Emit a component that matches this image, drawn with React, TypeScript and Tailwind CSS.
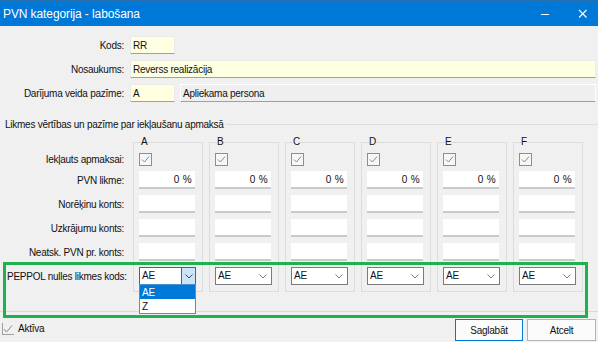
import React from 'react';

const cols = ['A', 'B', 'C', 'D', 'E', 'F'];

const CheckBox = ({ className = '' }: { className?: string }) => (
    <svg width="13" height="13" viewBox="0 0 13 13" className={className}>
        <rect x="0.5" y="0.5" width="12" height="12" fill="#f7f7f7" stroke="#8e8e8e" />
        <polyline points="3,6.5 5.5,9 10,3.5" fill="none" stroke="#8a8a8a" strokeWidth="1" />
    </svg>
);

const Chevron = ({ color = '#7a7a7a' }: { color?: string }) => (
    <svg width="8" height="5" viewBox="0 0 8 5">
        <polyline points="0.5,0.5 4,4 7.5,0.5" fill="none" stroke={color} strokeWidth="1" />
    </svg>
);

const Select = ({ open = false }: { open?: boolean }) => (
    <div
        className={`flex h-[18px] w-[57px] items-center border bg-white ${
            open ? 'border-[#0078d7]' : 'border-[#7a7a7a]'
        }`}
    >
        <span className="flex-1 pl-[2px] leading-none">AE</span>
        {open ? (
            <span className="flex h-full w-[14px] items-center justify-center border-l border-[#0078d7] bg-[#cce4f7]">
                <Chevron color="#4a4a4a" />
            </span>
        ) : (
            <span className="flex h-full w-[14px] items-center justify-center pr-[3px]">
                <Chevron />
            </span>
        )}
    </div>
);

const WhiteBox = ({ children }: { children?: React.ReactNode }) => (
    <div className="flex h-[18px] w-[56px] items-center justify-end border-b-2 border-[#c9c9c9] bg-white pr-[3px] tracking-[0.3px]">
        {children}
    </div>
);

const App = () => {
    return (
        <div
            className="relative flex h-[342px] w-[598px] flex-col overflow-hidden bg-[#f0f0f0] text-[10px] tracking-[-0.25px] text-[#111]"
            style={{ fontFamily: '"Liberation Sans", Arial, sans-serif' }}
        >
            {/* title bar */}
            <div className="flex h-[26px] shrink-0 items-center border-t border-[#2a6fae] bg-[#0078d7] text-white">
                <span className="ml-[3px] flex-1 text-[12px] tracking-[-0.1px]">PVN kategorija - labošana</span>
                <svg width="10" height="10" viewBox="0 0 10 10" className="mr-[28px]">
                    <line x1="1" y1="5.5" x2="9" y2="5.5" stroke="white" strokeWidth="1" />
                </svg>
                <svg width="10" height="10" viewBox="0 0 10 10" className="mr-[10px]">
                    <line x1="1" y1="1" x2="8.5" y2="8.5" stroke="white" strokeWidth="1.1" />
                    <line x1="8.5" y1="1" x2="1" y2="8.5" stroke="white" strokeWidth="1.1" />
                </svg>
            </div>

            {/* header fields */}
            <div className="flex flex-col gap-[6px] pt-[10px] pr-[2px]">
                <div className="flex h-[18px] items-center">
                    <span className="w-[124px] text-right">Kods:</span>
                    <div className="ml-[6px] flex h-full w-[45px] items-center border border-[#ebebeb] border-b-[#a0a0a0] bg-[#ffffe1] pl-[2px]">
                        RR
                    </div>
                </div>
                <div className="flex h-[18px] items-center">
                    <span className="w-[124px] text-right">Nosaukums:</span>
                    <div className="ml-[6px] flex h-full flex-1 items-center border border-[#ebebeb] border-b-[#a0a0a0] bg-[#ffffe1] pl-[2px]">
                        Reverss realizācija
                    </div>
                </div>
                <div className="flex h-[18px] items-center">
                    <span className="w-[124px] text-right">Darījuma veida pazīme:</span>
                    <div className="ml-[6px] flex h-full w-[45px] items-center border border-[#ebebeb] border-b-[#a0a0a0] bg-[#ffffe1] pl-[2px]">
                        A
                    </div>
                    <div className="ml-[5px] flex h-full flex-1 items-center border border-white border-b-[#a0a0a0] bg-[#efefef] pl-[2px]">
                        Apliekama persona
                    </div>
                </div>
            </div>

            {/* group box */}
            <div className="mt-[15px] flex h-[195px] shrink-0 flex-col border-b border-[#d9d9d9]">
                <div className="flex h-[14px] items-center">
                    <span className="ml-[5px] mr-[2px]">Likmes vērtības un pazīme par iekļaušanu apmaksā</span>
                    <div className="h-px flex-1 bg-[#dcdcdc]" />
                </div>
                <div className="mt-[5px] flex gap-[6px]">
                    <div className="flex w-[127px] flex-col pt-[15px]">
                        <div className="flex h-[16px] items-center justify-end pr-[3px]">Iekļauts apmaksai:</div>
                        <div className="mt-[4px] flex h-[18px] items-center justify-end pr-[3px]">PVN likme:</div>
                        <div className="mt-[6px] flex h-[18px] items-center justify-end pr-[3px]">Norēķinu konts:</div>
                        <div className="mt-[6px] flex h-[18px] items-center justify-end pr-[3px]">Uzkrājumu konts:</div>
                        <div className="mt-[6px] flex h-[18px] items-center justify-end pr-[3px]">Neatsk. PVN pr. konts:</div>
                        <div className="mt-[6px] flex h-[18px] items-center pl-[7px]">PEPPOL nulles likmes kods:</div>
                    </div>
                    {cols.map((c, i) => (
                        <fieldset key={c} className="w-[70px] border border-[#dcdcdc] pb-[6px] pl-[5px]">
                            <legend className="ml-[2px] h-[12px] leading-[12px]">{c}</legend>
                            <div className="mt-[3px] flex h-[16px] items-center">
                                <CheckBox />
                            </div>
                            <div className="mt-[4px]">
                                <WhiteBox>0 %</WhiteBox>
                            </div>
                            <div className="mt-[6px]">
                                <WhiteBox />
                            </div>
                            <div className="mt-[6px]">
                                <WhiteBox />
                            </div>
                            <div className="mt-[6px]">
                                <WhiteBox />
                            </div>
                            <div className="relative mt-[6px]">
                                <Select open={i === 0} />
                                {i === 0 && (
                                    <div className="absolute left-0 top-[17px] z-10 flex w-[57px] flex-col border border-[#4a90d0] bg-white">
                                        <div className="flex h-[14px] items-center bg-[#0078d7] pl-[2px] text-white">AE</div>
                                        <div className="flex h-[14px] items-center pl-[2px]">Z</div>
                                    </div>
                                )}
                            </div>
                        </fieldset>
                    ))}
                </div>
            </div>

            {/* bottom bar */}
            <div className="flex flex-1 items-start">
                <div className="ml-[2px] mt-[9px] flex items-center gap-[4px]">
                    <svg width="12" height="12" viewBox="0 0 12 12">
                        <polyline points="2,6 4.5,9 10,2.5" fill="none" stroke="#8a8a8a" strokeWidth="1" />
                        <line x1="0.5" y1="0" x2="0.5" y2="12" stroke="#a0a0a0" />
                        <line x1="0" y1="11.5" x2="12" y2="11.5" stroke="#a0a0a0" />
                    </svg>
                    <span>Aktīva</span>
                </div>
                <div className="ml-auto mr-[2px] mt-[7px] flex gap-[4px]">
                    <button className="h-[22px] w-[68px] border border-[#0078d7] bg-[#fbfbfb]">Saglabāt</button>
                    <button className="h-[22px] w-[69px] border border-[#b4b4b4] bg-[#fbfbfb]">Atcelt</button>
                </div>
            </div>

            {/* highlight frame */}
            <div className="pointer-events-none absolute left-[3px] top-[262px] h-[56px] w-[585px] border-[3px] border-[#1fb14f]" />
        </div>
    );
};

export default App;
